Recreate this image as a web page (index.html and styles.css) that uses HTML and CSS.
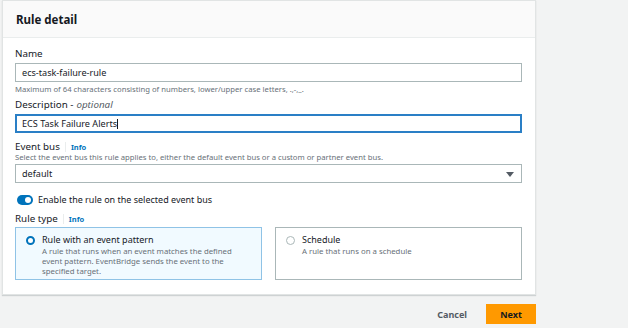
FILE: index.html
```html
<!DOCTYPE html>
<html>
<head>
  <meta charset="utf-8" />
  <title>Rule detail</title>
  <link rel="stylesheet" href="styles.css">
</head>
<body>
  <div class="page">
    <section class="card">
      <header class="card-head">
        <h2>Rule detail</h2>
      </header>
      <div class="card-body">
        <div class="field">
          <label class="field-label">Name</label>
          <div class="input">ecs-task-failure-rule</div>
          <p class="hint">Maximum of 64 characters consisting of numbers, lower/upper case letters, .,-,_.</p>
        </div>

        <div class="field spaced">
          <label class="field-label">Description - <em>optional</em></label>
          <div class="input focused">ECS Task Failure Alerts<span class="caret"></span></div>
        </div>

        <div class="field">
          <label class="field-label">Event bus <span class="sep"></span><a class="info">Info</a></label>
          <p class="hint top">Select the event bus this rule applies to, either the default event bus or a custom or partner event bus.</p>
          <div class="input select">default
            <svg class="arrow" width="8" height="5" viewBox="0 0 8 5"><path d="M0 0h8L4 5z" fill="#545b64"/></svg>
          </div>
        </div>

        <div class="toggle-row">
          <span class="toggle"><span class="knob"></span></span>
          <span>Enable the rule on the selected event bus</span>
        </div>

        <div class="field">
          <label class="field-label">Rule type <span class="sep"></span><a class="info">Info</a></label>
          <div class="tiles">
            <div class="tile selected">
              <span class="radio checked"></span>
              <div>
                <div class="tile-title">Rule with an event pattern</div>
                <div class="tile-desc">A rule that runs when an event matches the defined event pattern. EventBridge sends the event to the specified target.</div>
              </div>
            </div>
            <div class="tile">
              <span class="radio"></span>
              <div>
                <div class="tile-title">Schedule</div>
                <div class="tile-desc">A rule that runs on a schedule</div>
              </div>
            </div>
          </div>
        </div>
      </div>
    </section>

    <div class="actions">
      <button class="link-btn">Cancel</button>
      <button class="primary">Next</button>
    </div>
  </div>
</body>
</html>
```

FILE: styles.css
```css
* {
  box-sizing: border-box;
}
body {
  margin: 0;
  background: #f2f3f3;
  font-family: "Noto Sans", "Open Sans", Arial, sans-serif;
  color: #16191f;
}

.page {
  width: 536px;
  padding-left: 2px;
}

.card {
  background: #fff;
  border: 1px solid #e1e4e4;
  box-shadow: 0 1px 1px rgba(0, 28, 36, 0.15);
}
.card-head {
  height: 37px;
  padding: 0 13px;
  display: flex;
  align-items: center;
  background: #fafafa;
  border-bottom: 1px solid #eaeded;
}
.card-head h2 {
  margin: 0;
  font-size: 11.5px;
  font-weight: 700;
}
.card-body {
  padding: 8px 13px 11px 12px;
}

.field {
  margin-bottom: 3px;
}
.field.spaced {
  margin-bottom: 6px;
}
.field-label {
  display: flex;
  align-items: center;
  height: 15px;
  font-size: 9.8px;
  color: #16191f;
}
.field-label em {
  margin-left: 3px;
  font-style: italic;
  color: #545b64;
}
.sep {
  display: inline-block;
  width: 1px;
  height: 10px;
  margin: 0 5px 0 5px;
  background: #eaeded;
}
.info {
  color: #0073bb;
  font-weight: 700;
  font-size: 7.5px;
}

.input {
  position: relative;
  display: flex;
  align-items: center;
  height: 19px;
  margin-top: 2px;
  padding: 0 6px;
  border: 1px solid #aab7b8;
  font-size: 9.1px;
  color: #16191f;
}
.input.focused {
  border: 2px solid #2a7fc6;
  padding: 0 5px;
}
.caret {
  display: inline-block;
  width: 1px;
  height: 10px;
  background: #16191f;
}
.select .arrow {
  position: absolute;
  right: 7px;
  top: 7px;
}
.hint {
  margin: 2px 0 0;
  font-size: 7.7px;
  line-height: 10px;
  color: #687078;
}
.hint.top {
  margin: -2px 0 0;
}

.toggle-row {
  display: flex;
  align-items: center;
  gap: 5px;
  margin: 10px 0 5px 2px;
  font-size: 9px;
}
.toggle {
  display: flex;
  justify-content: flex-end;
  align-items: center;
  width: 16px;
  height: 10px;
  padding: 0 2px;
  border-radius: 5px;
  background: #0073bb;
}
.knob {
  width: 6px;
  height: 6px;
  border-radius: 50%;
  background: #fff;
}

.tiles {
  display: grid;
  grid-template-columns: 1fr 1fr;
  gap: 13px;
  margin-top: 1px;
}
.tile {
  display: flex;
  gap: 7px;
  height: 53px;
  padding: 6px 10px;
  border: 1px solid #aab7b8;
}
.tile.selected {
  background: #f1faff;
  border-color: #8fc3e6;
}
.radio {
  flex: none;
  width: 9px;
  height: 9px;
  margin-top: 2px;
  border: 1px solid #aab7b8;
  border-radius: 50%;
  background: #fff;
}
.radio.checked {
  border: 2.5px solid #0073bb;
}
.tile-title {
  font-size: 9px;
  line-height: 12px;
}
.tile-desc {
  max-width: 205px;
  font-size: 7.8px;
  line-height: 10px;
  color: #687078;
}

.actions {
  display: flex;
  justify-content: flex-end;
  align-items: center;
  gap: 19px;
  margin-top: 9px;
}
button {
  border: none;
  padding: 0;
  font-family: inherit;
  font-weight: 700;
  font-size: 9px;
  cursor: pointer;
}
.link-btn {
  background: none;
  color: #545b64;
}
.primary {
  width: 50px;
  height: 20px;
  background: #ff9900;
  color: #16191f;
}
```
